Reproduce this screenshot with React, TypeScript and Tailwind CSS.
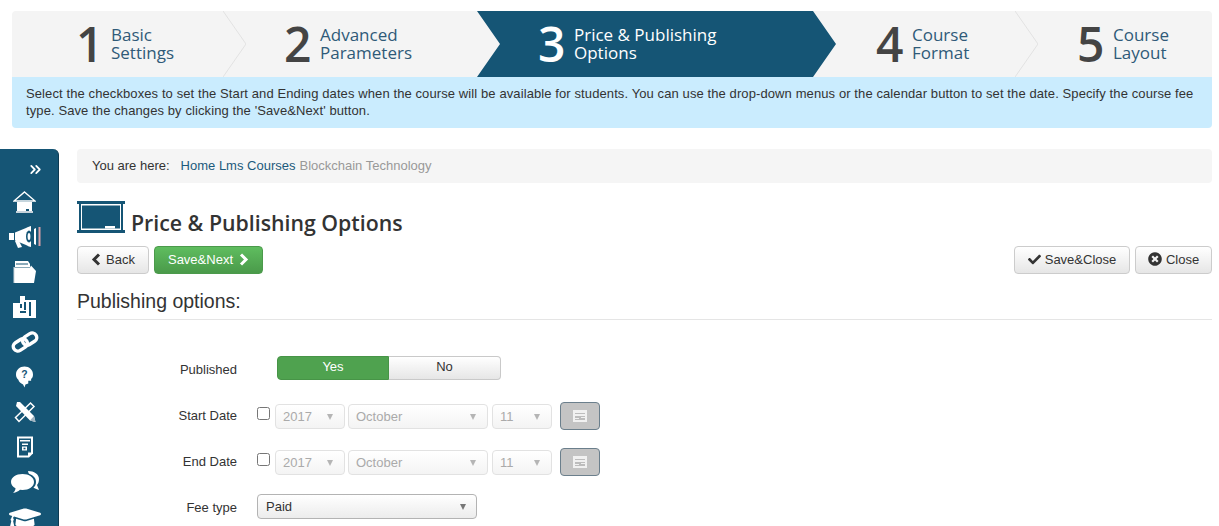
import React from 'react';
import { FaGraduationCap, FaTimesCircle, FaCheck } from 'react-icons/fa';
import { ChevronsRight } from 'lucide-react';

const steps = [
  { num: '1', top: 'Basic', bottom: 'Settings', width: 'w-[211px]', pad: 'pl-[64px]', numWidth: 'w-[35px]' },
  { num: '2', top: 'Advanced', bottom: 'Parameters', width: 'w-[254px]', pad: 'pl-[61px]', numWidth: 'w-[36px]' },
  { num: '3', top: 'Price & Publishing', bottom: 'Options', width: 'w-[336px]', pad: 'pl-[61px]', numWidth: 'w-[36px]', active: true },
  { num: '4', top: 'Course', bottom: 'Format', width: 'w-[202px]', pad: 'pl-[63px]', numWidth: 'w-[36px]' },
  { num: '5', top: 'Course', bottom: 'Layout', width: 'w-[197px]', pad: 'pl-[62px]', numWidth: 'w-[36px]', last: true },
];

const Step = ({ step }: { step: (typeof steps)[number] }) => (
  <div className={`relative flex h-full shrink-0 items-center ${step.width} ${step.pad}`}>
    {step.active && (
      <svg className="absolute top-0 left-0 h-[66px] w-[359px]" viewBox="0 0 359 66">
        <path d="M0 0H336L359 33L336 66H0L23 33Z" fill="#155575" />
      </svg>
    )}
    {(step.num === '1' || step.num === '4') && (
      <svg className="absolute top-0 right-[-23px] z-10 h-[66px] w-[23px]" viewBox="0 0 23 66">
        <path d="M0 0L23 33L0 66" fill="none" stroke="#e2e2e2" strokeWidth="1" />
      </svg>
    )}
    <span
      className={`relative shrink-0 font-['Open_Sans',sans-serif] text-[48px] leading-none font-semibold ${step.numWidth} ${
        step.active ? 'text-white' : 'text-[#444444]'
      }`}
    >
      {step.num}
    </span>
    <span
      className={`relative font-['Open_Sans',sans-serif] text-[17px] leading-[18px] whitespace-nowrap ${
        step.active ? 'text-white' : 'text-[#2f5a78]'
      }`}
    >
      {step.top}
      <br />
      {step.bottom}
    </span>
  </div>
);

const HomeIcon = () => (
  <svg width="23" height="22" viewBox="0 0 23 22">
    <path d="M11.5 1L22 10H1Z" fill="none" stroke="#fff" strokeWidth="1.4" />
    <path d="M4 11H19V20H4Z" fill="#fff" />
    <path d="M3 20H20V22H3Z" fill="#c6d3dc" />
    <path d="M13 18H16V20H13Z" fill="#155575" />
  </svg>
);

const MegaphoneIcon = () => (
  <svg width="32" height="22" viewBox="0 0 32 22">
    <path d="M0 7H5V14H0ZM6 6.5L17 2C19 1 21 0 22 0V21C21 21 19 20 17 19L6 14.5Z" fill="#fff" />
    <path d="M6 15H10L13 21L9 22Z" fill="#fff" />
    <ellipse cx="20" cy="10.5" rx="3" ry="6" fill="#155575" />
    <ellipse cx="20" cy="10.5" rx="1.4" ry="3.5" fill="#fff" />
    <path d="M25 3L27 2V19L25 18Z" fill="#fff" />
    <path d="M29.5 1H31.5V20H29.5Z" fill="#d9a0a8" />
  </svg>
);

const FolderIcon = () => (
  <svg width="23" height="22" viewBox="0 0 23 22">
    <path d="M2 0H15L17 3V6H2Z" fill="#fff" />
    <path d="M3 2.5H15V3.5H3Z" fill="#155575" />
    <path d="M1 6.5H17L18 4.5L23 10L21 22H1Z" fill="#fff" />
    <path d="M1 6V22H2" stroke="#cfd8de" strokeWidth="1" fill="none" />
  </svg>
);

const BlocksIcon = () => (
  <svg width="23" height="22" viewBox="0 0 23 22">
    <path d="M7 0H12V4H23V22H0V7H7Z" fill="#fff" />
    <path d="M11 6H13V14H11ZM7 15H13V17H7ZM16 6H18V20H16ZM7 8H9V12H7Z" fill="#155575" />
  </svg>
);

const LinkIcon = () => (
  <svg width="28" height="22" viewBox="0 0 28 22">
    <g transform="rotate(-32 14 11)" fill="none" stroke="#fff" strokeWidth="3.4">
      <rect x="1" y="6.5" width="15" height="9" rx="4.5" />
      <rect x="12" y="6.5" width="15" height="9" rx="4.5" />
    </g>
  </svg>
);

const HeadIcon = () => (
  <svg width="17" height="22" viewBox="0 0 18 22">
    <path
      d="M9 0C14 0 18 3.5 18 8.5C18 11 17 12 16 13V15H13V18L10 19L9 22L7.5 19C5 18 3 16 2.5 14C1 12.5 0 10.5 0 8.5C0 3.5 4 0 9 0Z"
      fill="#fff"
    />
    <text x="9" y="12" textAnchor="middle" fontSize="11" fontWeight="700" fontFamily="Liberation Sans" fill="#155575">
      ?
    </text>
  </svg>
);

const ToolsIcon = () => (
  <svg width="22" height="22" viewBox="0 0 22 22">
    <path d="M1.5 16.5L16.5 2L20 5.5L5 20.5Z" fill="#155575" stroke="#fff" strokeWidth="1.5" />
    <path d="M3 1L6 1L20 15L21.5 21L16 19.5L2 5Z" fill="#fff" />
    <path d="M16 19.5L21.5 21L20 15Z" fill="#9fb3c0" />
  </svg>
);

const FormIcon = () => (
  <svg width="16" height="22" viewBox="0 0 16 21">
    <path d="M0 0H16V17L12 21H0Z" fill="#fff" />
    <path d="M2 2H14V16H11V19H2Z" fill="#155575" />
    <path d="M3 3.5H13V5H3ZM5 7H11V8.5H5ZM5 10H10V14H5Z" fill="#fff" />
    <path d="M6.5 11.2H8.5V12.8H6.5Z" fill="#155575" />
  </svg>
);

const CommentsIcon = () => (
  <svg width="28" height="22" viewBox="0 0 28 22">
    <path d="M17 0C23 0 28 3 28 8C28 11 27 13 26 14L28 19C25 18 23 17 21 16Z" fill="#fff" />
    <ellipse cx="12" cy="11" rx="13" ry="9.5" fill="#155575" />
    <path d="M11.5 3C18 3 23 6.5 23 11C23 15.5 18 19 11.5 19L9 18.8C7 20.5 5 21.5 2 22C3.5 20.5 4.5 19 4.5 17.2C1.5 15.6 0 13.5 0 11C0 6.5 5 3 11.5 3Z" fill="#fff" />
  </svg>
);

const BoardIcon = () => (
  <svg width="48" height="32" viewBox="0 0 48 32" className="shrink-0">
    <path d="M0 0H48V3H46V29H48V32H0V29H2V3H0Z" fill="#155575" />
    <path d="M4 3H44V29H4Z" fill="#fff" />
    <path d="M5 4.5H43V27.5H5Z" fill="#155575" />
    <path d="M28 25H38V27.5H28Z" fill="#fff" />
  </svg>
);

const CalendarIcon = () => (
  <svg width="14" height="12" viewBox="0 0 14 12">
    <path d="M0 0H14V12H0Z" fill="#f1f1f1" />
    <path d="M2 3H12V4H2ZM2 6H12V7H8V8H12V10H2V9H6V8H2Z" fill="#bdbdbd" />
  </svg>
);

const ChevronLeftBold = () => (
  <svg width="10" height="13" viewBox="0 0 10 13">
    <path d="M8 1.5L3 6.5L8 11.5" fill="none" stroke="currentColor" strokeWidth="3" />
  </svg>
);

const ChevronRightBold = () => (
  <svg width="10" height="13" viewBox="0 0 10 13">
    <path d="M2 1.5L7 6.5L2 11.5" fill="none" stroke="currentColor" strokeWidth="3" />
  </svg>
);

const buttonBase =
  'flex h-[28px] items-center justify-center rounded border pb-[2px] text-[13px] leading-none whitespace-nowrap';
const defaultButton = `${buttonBase} border-[#cccccc] bg-gradient-to-b from-white to-[#e6e6e6] text-[#333333]`;

const DateSelect = ({ label, width }: { label: string; width: string }) => (
  <div
    className={`flex h-[25px] items-center justify-between rounded border border-[#e2e2e2] bg-gradient-to-b from-white to-[#f4f4f4] pt-[1px] pr-[11px] pl-[7px] text-[13px] text-[#aaaaaa] ${width}`}
  >
    <span>{label}</span>
    <span className="h-0 w-0 border-x-[3.5px] border-t-[6px] border-x-transparent border-t-[#b5b5b5]" />
  </div>
);

const DateRow = ({ label }: { label: string }) => (
  <div className="flex h-[28px] items-center">
    <span className="w-[160px] text-right text-[13px] text-[#333333]">{label}</span>
    <input type="checkbox" readOnly className="mt-[-5px] mr-[5px] ml-[20px] h-[13px] w-[13px] shrink-0" />
    <div className="flex items-center gap-[3px]">
      <DateSelect label="2017" width="w-[70px]" />
      <DateSelect label="October" width="w-[140px]" />
      <div className="ml-[1px]">
        <DateSelect label="11" width="w-[60px]" />
      </div>
    </div>
    <button className="ml-[8px] flex h-[28px] w-[40px] items-center justify-center rounded border border-[#6b7f8c] bg-[#c4c4c4]">
      <CalendarIcon />
    </button>
  </div>
);

const sideIcons = [
  <HomeIcon key="home" />,
  <MegaphoneIcon key="megaphone" />,
  <FolderIcon key="folder" />,
  <BlocksIcon key="blocks" />,
  <LinkIcon key="link" />,
  <HeadIcon key="head" />,
  <ToolsIcon key="tools" />,
  <FormIcon key="form" />,
  <CommentsIcon key="comments" />,
  <FaGraduationCap key="cap" size={32} className="mt-[2px]" />,
];

const App = () => (
  <div className="h-[526px] w-[1219px] overflow-hidden bg-white font-['Liberation_Sans',sans-serif] text-[#333333]">
    <div className="mx-[12px] mt-[11px] w-[1200px]">
      <div className="flex h-[66px] rounded-t bg-[#f4f4f4]">
        {steps.map((step) => (
          <Step key={step.num} step={step} />
        ))}
      </div>
      <div className="h-[51px] rounded-b bg-[#caecfe] px-[14px] pt-[8px] text-[13px] leading-[17px] tracking-[0.1px] text-[#333333]">
        Select the checkboxes to set the Start and Ending dates when the course will be available for students. You can
        use the drop-down menus or the calendar button to set the date. Specify the course fee type. Save the changes by
        clicking the 'Save&amp;Next' button.
      </div>
    </div>

    <div className="mt-[21px] flex">
      <aside className="flex h-[400px] w-[59px] shrink-0 flex-col rounded-tr-md border-r border-[#0d3a52] bg-[#155575] pr-[9px] text-white">
        <div className="flex h-[35px] items-center justify-end pt-[5px] pr-[5px]">
          <ChevronsRight size={17} strokeWidth={2.5} />
        </div>
        {sideIcons.map((icon, index) => (
          <div key={index} className="flex h-[35px] shrink-0 items-center justify-center">
            {icon}
          </div>
        ))}
      </aside>

      <main className="ml-[18px] w-[1135px]">
        <div className="flex h-[34px] items-center rounded bg-[#f5f5f5] pl-[15px] text-[13px]">
          <span className="mr-[11px]">You are here:</span>
          <span className="text-[#1b5a7c]">Home Lms Courses</span>
          <span className="ml-[4px] text-[#999999]">Blockchain Technology</span>
        </div>

        <div className="mt-[18px] flex h-[32px] items-end">
          <BoardIcon />
          <h1 className="ml-[6px] translate-y-[2px] font-['Open_Sans',sans-serif] text-[21.3px] leading-[24px] font-semibold text-[#333333]">
            Price &amp; Publishing Options
          </h1>
        </div>

        <div className="mt-[13px] flex justify-between">
          <div className="flex gap-[5px]">
            <button className={`${defaultButton} w-[72px] gap-[5px]`}>
              <ChevronLeftBold />
              Back
            </button>
            <button className={`${buttonBase} w-[109px] gap-[6px] border-[#4b9a4b] bg-gradient-to-b from-[#5fbd5f] to-[#4a9a4a] text-white`}>
              Save&amp;Next
              <ChevronRightBold />
            </button>
          </div>
          <div className="flex gap-[5px]">
            <button className={`${defaultButton} w-[116px] gap-[4px]`}>
              <FaCheck size={13} />
              Save&amp;Close
            </button>
            <button className={`${defaultButton} w-[77px] gap-[4px]`}>
              <FaTimesCircle size={14} />
              Close
            </button>
          </div>
        </div>

        <h2 className="mt-[16px] border-b border-[#e5e5e5] pb-[7px] text-[19.5px] leading-[22px] font-normal text-[#333333]">
          Publishing options:
        </h2>

        <div className="mt-[36px] flex h-[24px] items-center">
          <span className="mt-[3px] w-[160px] text-right text-[13px]">Published</span>
          <div className="ml-[40px] flex h-[24px] w-[224px] text-[13px]">
            <div className="flex w-[112px] items-center justify-center rounded-l border border-[#479447] bg-[#4fa24f] pb-[2px] text-white">
              Yes
            </div>
            <div className="flex w-[112px] items-center justify-center rounded-r border border-l-0 border-[#c9c9c9] bg-gradient-to-b from-white to-[#e6e6e6] pb-[2px]">
              No
            </div>
          </div>
        </div>

        <div className="mt-[22px] flex flex-col gap-[18px]">
          <DateRow label="Start Date" />
          <DateRow label="End Date" />
        </div>

        <div className="mt-[18px] flex h-[25px] items-center">
          <span className="mt-[2px] w-[160px] text-right text-[13px]">Fee type</span>
          <div className="ml-[20px] flex h-[25px] w-[220px] items-center justify-between rounded border border-[#b3b3b3] bg-gradient-to-b from-white to-[#ececec] pr-[10px] pl-[8px] text-[13px]">
            <span>Paid</span>
            <span className="h-0 w-0 border-x-[3.5px] border-t-[6px] border-x-transparent border-t-[#777777]" />
          </div>
        </div>
      </main>
    </div>
  </div>
);

export default App;
